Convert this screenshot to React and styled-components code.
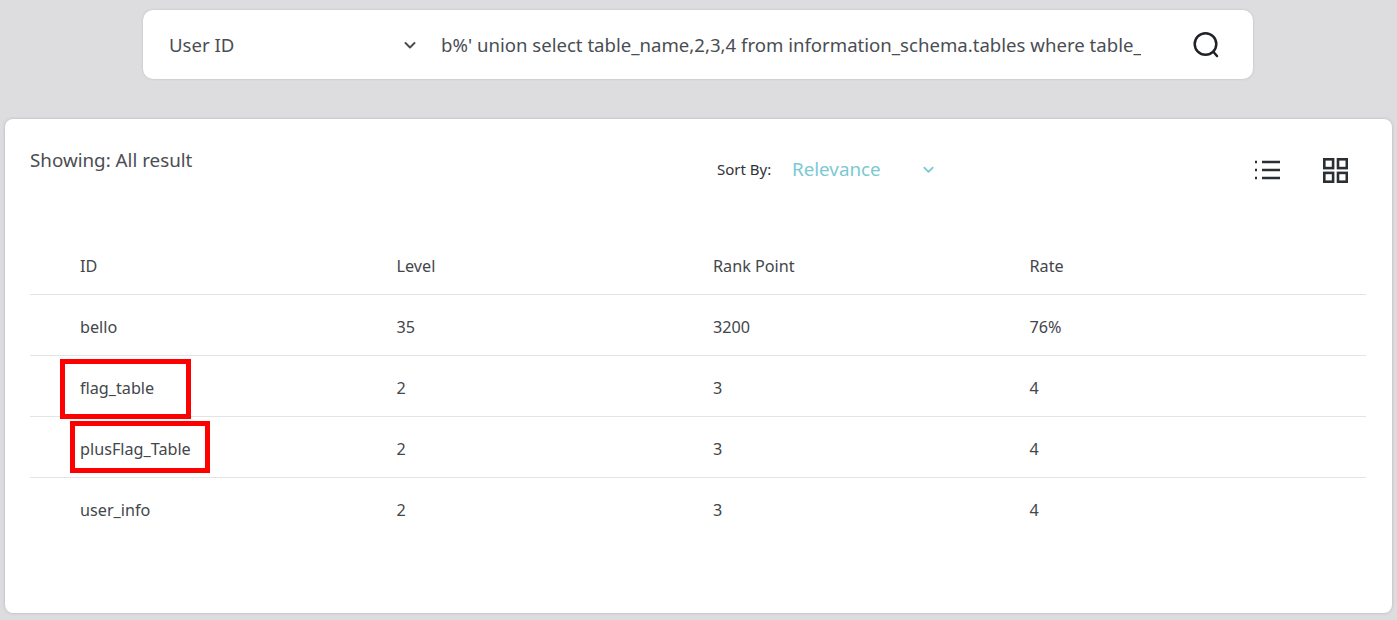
import React from "react";
import styled, { createGlobalStyle } from "styled-components";

const Global = createGlobalStyle`
  html, body { margin: 0; padding: 0; background: #dddddf; }
  body { font-family: "Noto Sans", "Open Sans", sans-serif; color: #4a4d52; }
`;
const Page = styled.div`
  width: 1397px; height: 620px; box-sizing: border-box; overflow: hidden;
  padding: 10px 5px 0; display: flex; flex-direction: column; align-items: flex-start; background: #dddddf;
`;
const SearchBar = styled.div`
  width: 1110px; height: 69px; flex: none; box-sizing: border-box; background: #fff; border-radius: 10px; margin-left: 138px;
  box-shadow: 0 0 2px rgba(150,150,160,.5); display: flex; align-items: center; padding: 0 33px 0 26px; font-size: 18.6px;
`;
const Select = styled.div`
  width: 272px; flex: none; display: flex; align-items: center; justify-content: space-between; padding-right: 24px; box-sizing: border-box;
  svg { display: block; }
`;
const Query = styled.div`flex: none; white-space: nowrap; overflow: hidden; width: 700px; margin-right: auto;`;
const IconButton = styled.span`display: inline-flex; color: #1f2226;`;
const Card = styled.main`
  width: 1387px; height: 494px; margin-top: 40px; flex: none; box-sizing: border-box; background: #fff; border-radius: 8px;
  box-shadow: 0 0 3px rgba(150,150,160,.6); padding: 0 26px 0 25px;
`;
const Toolbar = styled.div`height: 120px; position: relative; display: flex; align-items: flex-start;`;
const Showing = styled.div`margin-top: 28px; width: 687px; flex: none; font-size: 18.8px; line-height: 26px;`;
const Sort = styled.div`margin-top: 37px; display: flex; align-items: center; height: 26px;`;
const SortLabel = styled.span`font-size: 15px; color: #2f3237; width: 75px;`;
const SortValue = styled.span`font-size: 18.8px; color: #7cc8d3; width: 130px;`;
const Views = styled.div`margin-left: auto; margin-top: 38px; display: flex; gap: 41px; padding-right: 18px; color: #2b2e33;`;
const Row = styled.div`
  display: grid; grid-template-columns: 316.5px 316.5px 316.5px 1fr; padding: 4px 0 0 50px; height: 61px; align-items: center;
  box-sizing: border-box; font-size: 16.2px; line-height: 22px; color: #43464b;
  ${p => p.$head ? "height: 56px; padding-top: 0; padding-bottom: 2px;" : ""}
  border-bottom: 1px solid ${p => p.$line ? "#e3e4e6" : "transparent"};
`;
const Cell = styled.div`position: relative; white-space: nowrap;`;
const Mark = styled.span`
  position: absolute; box-sizing: border-box; border: 5px solid #f00; pointer-events: none;
  left: ${p => p.$l}px; top: ${p => p.$t}px; width: ${p => p.$w}px; height: ${p => p.$h}px;
`;

const rows = [
  ["bello", "35", "3200", "76%"],
  ["flag_table", "2", "3", "4", { l: -20, t: -18, w: 131, h: 60 }],
  ["plusFlag_Table", "2", "3", "4", { l: -10, t: -17, w: 140, h: 52 }],
  ["user_info", "2", "3", "4"],
];

const Chevron = ({ size = 14, color = "currentColor" }) => (
  <svg width={size} height={size} viewBox="0 0 14 14" fill="none" stroke={color} strokeWidth="2" strokeLinecap="round" strokeLinejoin="round"><path d="M2.5 5l4.5 4.5L11.5 5" /></svg>
);

export default function App() {
  return (
    <Page>
      <Global />
      <SearchBar>
        <Select>User ID<Chevron /></Select>
        <Query>b%' union select table_name,2,3,4 from information_schema.tables where table_</Query>
        <IconButton>
          <svg width="28" height="28" viewBox="0 0 28 28" fill="none" stroke="currentColor" strokeWidth="2.5" strokeLinecap="round"><circle cx="13.5" cy="13" r="10.8" /><path d="M21.5 21l3.5 4" /></svg>
        </IconButton>
      </SearchBar>
      <Card>
        <Toolbar>
          <Showing>Showing: All result</Showing>
          <Sort>
            <SortLabel>Sort By:</SortLabel>
            <SortValue>Relevance</SortValue>
            <Chevron size={13} color="#7cc8d3" />
          </Sort>
          <Views>
            <svg width="28" height="26" viewBox="0 0 28 26" fill="none" stroke="currentColor" strokeWidth="2.5"><path d="M8 5h18M8 13h18M8 21h18" /><path d="M1 5h2M1 13h2M1 21h2" /></svg>
            <svg width="25" height="26" viewBox="0 0 25 26" fill="none" stroke="currentColor" strokeWidth="2.6"><rect x="1.3" y="2.3" width="8.8" height="8.8" /><rect x="15" y="2.3" width="8.8" height="8.8" /><rect x="1.3" y="15.9" width="8.8" height="8.8" /><rect x="15" y="15.9" width="8.8" height="8.8" /></svg>
          </Views>
        </Toolbar>
        <Row $head $line><Cell>ID</Cell><Cell>Level</Cell><Cell>Rank Point</Cell><Cell>Rate</Cell></Row>
        {rows.map((r, i) => (
          <Row key={r[0]} $line={i < 3}>
            <Cell>{r[0]}{r[4] && <Mark $l={r[4].l} $t={r[4].t} $w={r[4].w} $h={r[4].h} />}</Cell>
            <Cell>{r[1]}</Cell><Cell>{r[2]}</Cell><Cell>{r[3]}</Cell>
          </Row>
        ))}
      </Card>
    </Page>
  );
}
